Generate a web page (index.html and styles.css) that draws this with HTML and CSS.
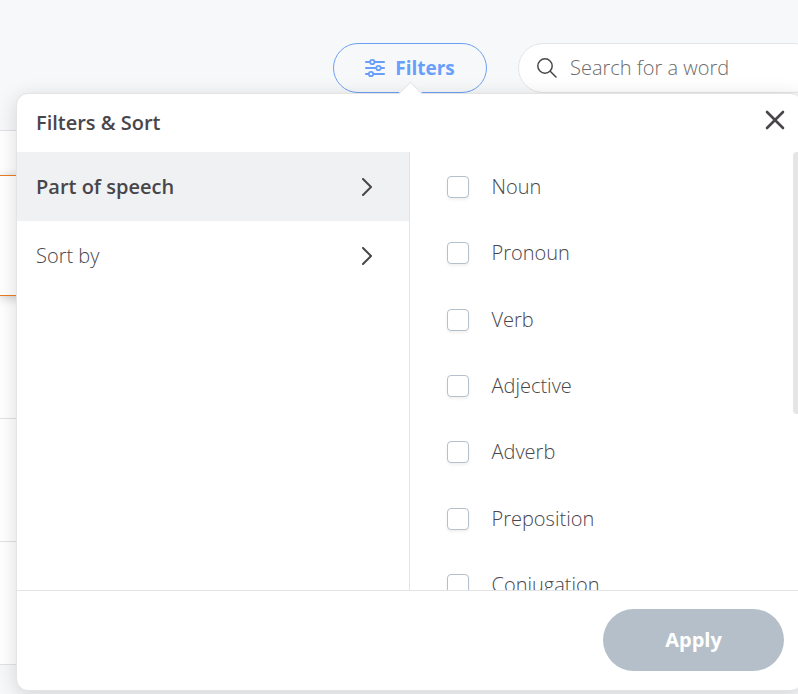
FILE: index.html
```
<!DOCTYPE html>
<html lang="en">
<head>
<meta charset="utf-8">
<meta name="viewport" content="width=device-width, initial-scale=1">
<title>Word list</title>
<link rel="stylesheet" href="styles.css">
</head>
<body>
<div class="page">
  <header class="toolbar">
    <button class="filters-button" type="button">
      <svg width="20" height="20" viewBox="0 0 20 20" fill="none" stroke="currentColor" stroke-width="1.8" stroke-linecap="round" aria-hidden="true">
        <path d="M.9 4H5M9.600 4H19.100M.9 10H11.200M15.800 10H19.100M.9 16H3.700M8.300 16H19.100"/>
        <circle cx="7.300" cy="4" r="2.200"/><circle cx="13.500" cy="10" r="2.200"/><circle cx="6" cy="16" r="2.200"/>
      </svg>
      <span>Filters</span>
    </button>
    <label class="search">
      <svg width="20" height="20" viewBox="0 0 20 20" fill="none" stroke="currentColor" stroke-width="1.500" stroke-linecap="round" aria-hidden="true">
        <circle cx="8" cy="8" r="7.200"/><path d="M13.200 13.200L19 19"/>
      </svg>
      <input type="search" placeholder="Search for a word" aria-label="Search for a word">
    </label>
  </header>
  <main class="word-list">
    <div class="list-head"></div>
    <div class="list-row selected"></div>
    <div class="list-row"></div>
    <div class="list-row"></div>
    <div class="list-row"></div>
  </main>
  <section class="panel" aria-labelledby="panel-title">
    <div class="panel-head">
      <h2 id="panel-title">Filters &amp; Sort</h2>
      <button class="close" type="button" aria-label="Close">
        <svg width="20" height="20" viewBox="0 0 20 20" fill="none" stroke="currentColor" stroke-width="2.600" stroke-linecap="round" aria-hidden="true"><path d="M2 2L18 18M18 2L2 18"/></svg>
      </button>
    </div>
    <div class="panel-body">
      <nav class="sections">
        <button class="section active" type="button"><span>Part of speech</span>
          <svg width="12" height="18" viewBox="0 0 12 18" fill="none" stroke="currentColor" stroke-width="2" stroke-linecap="round" stroke-linejoin="round" aria-hidden="true"><path d="M2 1L10 9L2 17"/></svg></button>
        <button class="section" type="button"><span>Sort by</span>
          <svg width="12" height="18" viewBox="0 0 12 18" fill="none" stroke="currentColor" stroke-width="2" stroke-linecap="round" stroke-linejoin="round" aria-hidden="true"><path d="M2 1L10 9L2 17"/></svg></button>
      </nav>
      <div class="options">
        <div class="option-list">
          <label class="option"><input type="checkbox"><span>Noun</span></label>
          <label class="option"><input type="checkbox"><span>Pronoun</span></label>
          <label class="option"><input type="checkbox"><span>Verb</span></label>
          <label class="option"><input type="checkbox"><span>Adjective</span></label>
          <label class="option"><input type="checkbox"><span>Adverb</span></label>
          <label class="option"><input type="checkbox"><span>Preposition</span></label>
          <label class="option"><input type="checkbox"><span>Conjugation</span></label>
        </div>
        <div class="scroll-thumb"></div>
      </div>
    </div>
    <footer class="panel-foot"><button class="apply" type="button">Apply</button></footer>
  </section>
</div>
</body>
</html>
```
FILE: styles.css
```
* { box-sizing: border-box; }
body {
  margin: 0;
  background: #f7f8fa;
  color: #49464a;
  font-family: "Open Sans", "Noto Sans", sans-serif;
  font-size: 20px;
  line-height: 24px;
}
button, input { font: inherit; color: inherit; }
button { border: 0; padding: 0; background: none; cursor: pointer; }
svg { display: block; flex: none; }
h2 { margin: 0; font-size: 20px; font-weight: 600; }

.page { position: relative; min-height: 100vh; overflow: hidden; }
.toolbar { display: flex; justify-content: flex-end; gap: 31px; height: 130px; padding-top: 43px; }
.filters-button {
  display: flex; align-items: center; justify-content: center; gap: 10px;
  width: 154px; height: 50px;
  border: 1px solid #6aa1f5; border-radius: 25px;
  color: #689ffb; font-size: 19px; font-weight: 700;
}
.search {
  display: flex; align-items: center; gap: 13px;
  width: 300px; height: 50px; margin-right: -20px; padding-left: 18px;
  border: 1px solid #e5e5e5; border-radius: 25px; background: #fff;
}
.search input { flex: 1; min-width: 0; padding: 0; border: 0; outline: 0; background: none; font-weight: 300; }
.search input::placeholder { color: #6c6c6c; opacity: 1; }

.word-list { border-top: 1px solid #e2e2e4; background: #fff; }
.list-head { height: 44px; }
.list-row { height: 123px; border-bottom: 1px solid #e2e2e4; }
.list-row.selected {
  height: 121px;
  border-top: 1px solid #ed7a22; border-bottom-color: #ed7a22;
  box-shadow: 0 2px 10px rgba(0, 0, 0, .2);
}

.panel {
  position: absolute; top: 93px; left: 16px; right: -5px;
  border: 1px solid #e4e4e5; border-radius: 12px; background: #fff;
  box-shadow: 0 4px 20px rgba(0, 0, 0, .15);
}
.panel::before {
  content: ""; position: absolute; top: -9px; left: 385px;
  width: 16px; height: 16px;
  border: 1px solid #e4e4e5; border-right: 0; border-bottom: 0;
  background: #fff; transform: rotate(45deg);
}
.panel-head { display: flex; align-items: center; justify-content: space-between; height: 58px; padding: 0 17px 0 19px; }
.close { align-self: flex-start; margin-top: 16px; }
.panel-body { display: grid; grid-template-columns: 1fr 1fr; height: 438px; }
.sections { border-right: 1px solid #e4e4e5; }
.section {
  display: flex; align-items: center; justify-content: space-between;
  width: 100%; height: 69px; padding: 0 36px 0 19px;
  font-weight: 300; text-align: left;
}
.section.active { background: #f0f1f3; font-weight: 600; }
.options { display: flex; justify-content: space-between; overflow: hidden; }
.option-list { display: grid; grid-auto-rows: 1fr; flex: 1; height: 464px; margin-top: 2px; padding-left: 37px; }
.option { display: flex; align-items: center; gap: 23px; font-weight: 300; }
.option input {
  appearance: none; width: 22px; height: 22px; margin: 0;
  border: 1px solid #b4c0cc; border-radius: 4px; background: #fff;
  box-shadow: 0 2px 3px rgba(0, 0, 0, .06);
}
.option input:checked { background: #689ffb; }
.scroll-thumb { width: 9px; height: 262px; border-radius: 4px; background: #e5e5e5; }
.panel-foot { display: flex; justify-content: flex-end; padding: 18px 18px 19px; border-top: 1px solid #e4e4e5; }
.apply { width: 181px; height: 62px; border-radius: 31px; background: #b5bfc9; color: #fff; font-weight: 700; }
```
